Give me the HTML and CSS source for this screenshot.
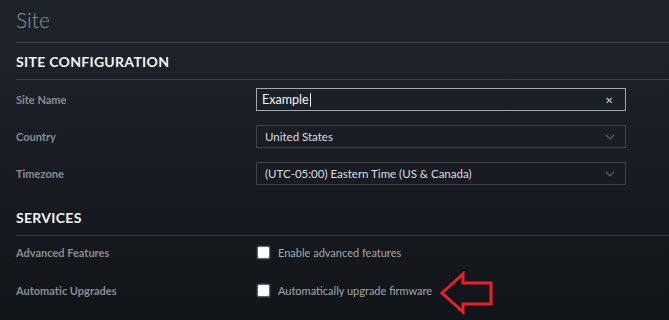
FILE: index.html
```html
<!DOCTYPE html>
<html lang="en">
<head>
    <meta charset="UTF-8">
    <title>Site</title>
    <link rel="stylesheet" href="styles.css">
</head>
<body>

<div class="page">
  <h1 class="page-title">Site</h1>

  <!-- Site configuration -->
  <section class="section">
    <h2 class="section-title">Site Configuration</h2>

    <div class="row">
      <label class="row-label">Site Name</label>
      <div class="field field-active">
        <span class="field-value">Example<span class="caret"></span></span>
        <span class="clear">&#x2715;</span>
      </div>
    </div>

    <div class="row">
      <label class="row-label">Country</label>
      <div class="field">
        <span class="field-value">United States</span>
        <svg class="chevron" width="10" height="6" viewBox="0 0 10 6"><path d="M1 1 L5 5 L9 1" fill="none" stroke="#5c636b" stroke-width="1.2"/></svg>
      </div>
    </div>

    <div class="row">
      <label class="row-label">Timezone</label>
      <div class="field">
        <span class="field-value">(UTC-05:00) Eastern Time (US &amp; Canada)</span>
        <svg class="chevron" width="10" height="6" viewBox="0 0 10 6"><path d="M1 1 L5 5 L9 1" fill="none" stroke="#5c636b" stroke-width="1.2"/></svg>
      </div>
    </div>
  </section>

  <!-- Services -->
  <section class="section services">
    <h2 class="section-title">Services</h2>

    <div class="row row-check">
      <label class="row-label">Advanced Features</label>
      <div class="check">
        <span class="box"></span>
        <span class="check-text">Enable advanced features</span>
      </div>
    </div>

    <div class="row row-check">
      <label class="row-label">Automatic Upgrades</label>
      <div class="check">
        <span class="box"></span>
        <span class="check-text">Automatically upgrade firmware</span>
        <svg class="pointer" width="56" height="44" viewBox="0 0 56 44">
          <path d="M3 22 L24 3 L24 12 L52 12 L52 33 L24 33 L24 41 Z" fill="none" stroke="#e8212b" stroke-width="3" stroke-linejoin="miter"/>
        </svg>
      </div>
    </div>
  </section>
</div>

</body>
</html>
```

FILE: styles.css
```css
body {
    margin: 0;
    font-family: 'Lato', 'Liberation Sans', Arial, sans-serif;
    background: linear-gradient(180deg, #1f242b 0%, #181c22 55%, #111418 100%);
    color: #d8dadd;
    height: 320px;
    overflow: hidden;
}
.page {
    padding-left: 16px;
}
.page-title {
    margin: 0;
    height: 42px;
    line-height: 40px;
    font-size: 21px;
    font-weight: 300;
    color: #8d939b;
    border-bottom: 1px solid #3b414a;
}
.section-title {
    margin: 0;
    height: 36px;
    line-height: 38px;
    font-size: 14px;
    font-weight: 700;
    color: #f2f3f4;
    text-transform: uppercase;
    letter-spacing: 0.3px;
    border-bottom: 1px solid #3b414a;
}
.section > .row:first-of-type {
    margin-top: 8px;
}
.row {
    display: flex;
    align-items: center;
    height: 23px;
    margin-bottom: 14px;
}
.row-label {
    width: 240px;
    flex: none;
    font-size: 11px;
    font-weight: 700;
    color: #878e96;
}
.field {
    box-sizing: border-box;
    width: 370px;
    height: 23px;
    display: flex;
    align-items: center;
    justify-content: space-between;
    border: 1px solid #3c434b;
    padding: 0 10px 0 8px;
    font-size: 11.5px;
    color: #dcdee0;
}
.field-active {
    border-color: #a3a8ad;
    padding-left: 5px;
    font-size: 12.5px;
    color: #f4f5f6;
}
.caret {
    display: inline-block;
    width: 1px;
    height: 14px;
    background: #f4f5f6;
    vertical-align: -3px;
    margin-left: 1px;
}
.clear {
    font-size: 10px;
    color: #c9ccd0;
    margin-right: 2px;
}
.services > .row:first-of-type {
    margin-top: 4px;
}
.row-check {
    height: 24px;
}
.check {
    position: relative;
    display: flex;
    align-items: center;
    padding-left: 1px;
}
.box {
    width: 11px;
    height: 11px;
    background: #ffffff;
    border: 1px solid #5a6168;
    border-radius: 2px;
    box-shadow: 0 0 0 1px #2a2f35;
}
.check-text {
    margin-left: 8px;
    font-size: 11px;
    color: #a2a8ae;
}
/* annotation arrow */
.pointer {
    position: absolute;
    left: 183px;
    top: -13px;
}
```
